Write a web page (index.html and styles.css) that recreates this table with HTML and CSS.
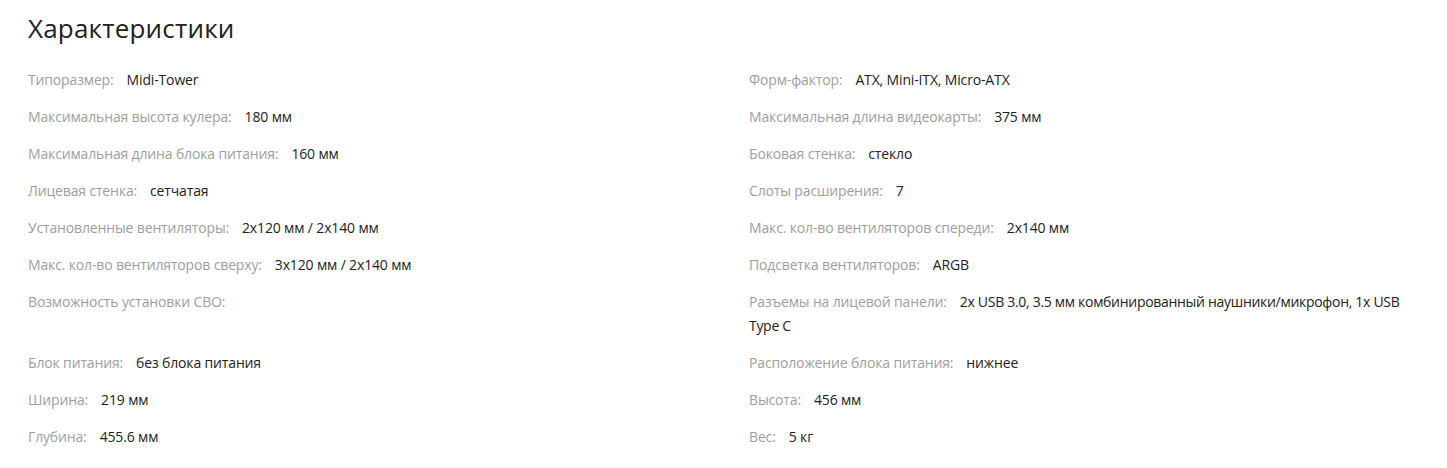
FILE: index.html
```html
<!DOCTYPE html>
<html lang="ru">
<head>
<meta charset="utf-8">
<link rel="stylesheet" href="styles.css">
</head>
<body>
<section class="specs">
  <h2 class="specs-title">Характеристики</h2>
  <div class="specs-grid">
    <div class="spec"><span class="spec-label">Типоразмер:</span><span class="spec-value">Midi-Tower</span></div>
    <div class="spec"><span class="spec-label">Форм-фактор:</span><span class="spec-value">ATX, Mini-ITX, Micro-ATX</span></div>
    <div class="spec"><span class="spec-label">Максимальная высота кулера:</span><span class="spec-value">180 мм</span></div>
    <div class="spec"><span class="spec-label">Максимальная длина видеокарты:</span><span class="spec-value">375 мм</span></div>
    <div class="spec"><span class="spec-label">Максимальная длина блока питания:</span><span class="spec-value">160 мм</span></div>
    <div class="spec"><span class="spec-label">Боковая стенка:</span><span class="spec-value">стекло</span></div>
    <div class="spec"><span class="spec-label">Лицевая стенка:</span><span class="spec-value">сетчатая</span></div>
    <div class="spec"><span class="spec-label">Слоты расширения:</span><span class="spec-value">7</span></div>
    <div class="spec"><span class="spec-label">Установленные вентиляторы:</span><span class="spec-value">2x120 мм / 2x140 мм</span></div>
    <div class="spec"><span class="spec-label">Макс. кол-во вентиляторов спереди:</span><span class="spec-value">2x140 мм</span></div>
    <div class="spec"><span class="spec-label">Макс. кол-во вентиляторов сверху:</span><span class="spec-value">3x120 мм / 2x140 мм</span></div>
    <div class="spec"><span class="spec-label">Подсветка вентиляторов:</span><span class="spec-value">ARGB</span></div>
    <div class="spec"><span class="spec-label">Возможность установки СВО:</span><span class="spec-value"></span></div>
    <div class="spec"><span class="spec-label">Разъемы на лицевой панели:</span><span class="spec-value spec-value--condensed">2x USB 3.0, 3.5 мм комбинированный наушники/микрофон, 1x USB Type C</span></div>
    <div class="spec"><span class="spec-label">Блок питания:</span><span class="spec-value">без блока питания</span></div>
    <div class="spec"><span class="spec-label">Расположение блока питания:</span><span class="spec-value">нижнее</span></div>
    <div class="spec"><span class="spec-label">Ширина:</span><span class="spec-value">219 мм</span></div>
    <div class="spec"><span class="spec-label">Высота:</span><span class="spec-value">456 мм</span></div>
    <div class="spec"><span class="spec-label">Глубина:</span><span class="spec-value">455.6 мм</span></div>
    <div class="spec"><span class="spec-label">Вес:</span><span class="spec-value">5 кг</span></div>
  </div>
</section>
</body>
</html>
```

FILE: styles.css
```css
html, body {
  margin: 0;
  padding: 0;
  background: #ffffff;
}
body {
  font-family: "Open Sans", "Noto Sans", sans-serif;
  color: #222222;
}
.specs {
  padding: 12px 28px 0 28px;
}
.specs-title {
  margin: 0 0 24px 0;
  font-size: 26px;
  line-height: 32px;
  font-weight: 500;
  letter-spacing: 0.2px;
  color: #222222;
}
.specs-grid {
  display: grid;
  grid-template-columns: 693px 1fr;
  column-gap: 28px;
  row-gap: 13px;
}
.spec {
  font-size: 14px;
  line-height: 24px;
  letter-spacing: -0.15px;
}
.spec-label {
  color: #9e9e9e;
  margin-right: 13px;
}
.spec-value {
  color: #222222;
}
.spec-value--condensed {
  letter-spacing: -0.3px;
}
```
